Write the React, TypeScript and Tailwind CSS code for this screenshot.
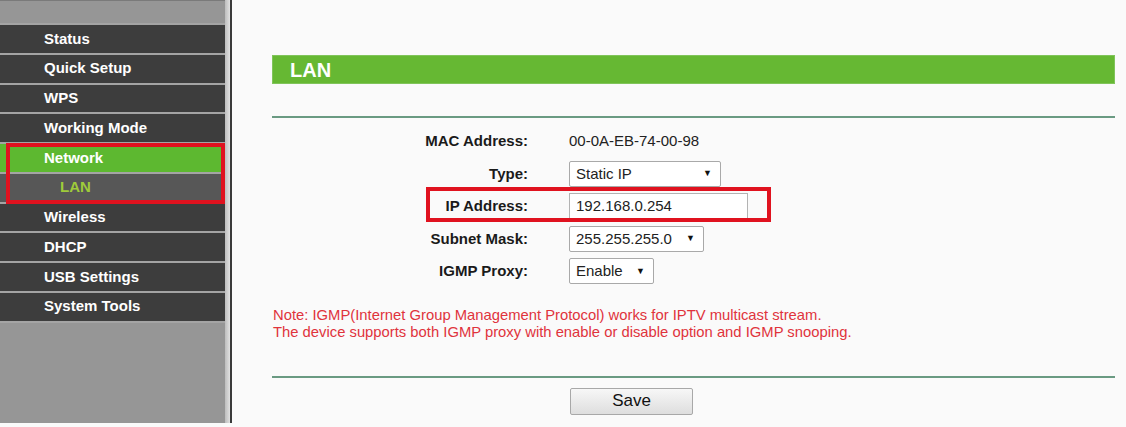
const menu = [
  { label: 'Status' },
  { label: 'Quick Setup' },
  { label: 'WPS' },
  { label: 'Working Mode' },
  { label: 'Network', active: true },
  { label: 'LAN', sub: true },
  { label: 'Wireless' },
  { label: 'DHCP' },
  { label: 'USB Settings' },
  { label: 'System Tools' },
];

function FakeSelect({ value, width }: { value: string; width: string }) {
  return (
    <div
      className={`${width} h-[26px] flex items-center justify-between pl-[6px] pr-[8px] bg-white border border-[#a9a9a9] rounded-[2px] text-[15px] text-[#222]`}
    >
      <span>{value}</span>
      <span className="text-[9px] text-[#111]">▼</span>
    </div>
  );
}

export default function App() {
  return (
    <div
      className="w-[1126px] h-[427px] overflow-hidden bg-[#fafafa] flex"
      style={{ fontFamily: '"Liberation Sans", Arial, sans-serif' }}
    >
      {/* Sidebar */}
      <div className="h-[423px] flex shrink-0">
        <div className="relative w-[225px] h-full bg-[#969696] border-t border-[#7a7a7a] pt-[22px]">
          <div className="border-t-2 border-[#a4a4a4]">
            {menu.map((m) => (
              <div
                key={m.label}
                className={`h-[29.75px] border-b-2 border-[#a4a4a4] flex items-center font-bold text-[15px] ${
                  m.active
                    ? 'bg-[#5db830] text-white'
                    : m.sub
                    ? 'bg-[#575757] text-[#9fcb3a]'
                    : 'bg-[#3d3d3d] text-white'
                } ${m.sub ? 'pl-[60px]' : 'pl-[44px]'}`}
              >
                {m.label}
              </div>
            ))}
          </div>
          {/* highlight annotation */}
          <div className="absolute left-[6px] top-[142px] w-[219px] h-[61px] border-4 border-[#e0121f]" />
        </div>
        <div className="w-[5px] h-full bg-gradient-to-r from-[#bdbdbd] to-[#e2e2e2]" />
        <div className="w-[2px] h-full bg-[#3a3a3a]" />
      </div>

      {/* Content */}
      <div className="flex-1 pl-[40px] pr-[11px] pt-[55px]">
        <div className="h-[29px] bg-[#66b833] border border-[#80c45a] flex items-center pl-[17px] text-white font-bold text-[20px]">
          LAN
        </div>
        <div className="mt-[32px] h-[2px] bg-[#6a9a82]" />

        <div className="relative mt-[7px]">
          <div className="grid grid-cols-[256px_1fr] gap-x-[41px] auto-rows-[32.5px] items-center text-[15px]">
            <div className="text-right font-bold text-[#1a1a1a]">MAC Address:</div>
            <div className="text-[#222]">00-0A-EB-74-00-98</div>

            <div className="text-right font-bold text-[#1a1a1a]">Type:</div>
            <FakeSelect value="Static IP" width="w-[152px]" />

            <div className="text-right font-bold text-[#1a1a1a]">IP Address:</div>
            <div className="w-[179px] h-[26px] bg-white border border-[#b3b3b3] flex items-center pl-[6px] text-[#222]">
              192.168.0.254
            </div>

            <div className="text-right font-bold text-[#1a1a1a]">Subnet Mask:</div>
            <FakeSelect value="255.255.255.0" width="w-[135px]" />

            <div className="text-right font-bold text-[#1a1a1a]">IGMP Proxy:</div>
            <FakeSelect value="Enable" width="w-[85px]" />
          </div>
          {/* highlight annotation */}
          <div className="absolute left-[154px] top-[62px] w-[345px] h-[35px] border-4 border-[#e0121f]" />
        </div>

        <div className="mt-[19px] text-[14.8px] leading-[17px] text-[#e0333c] pl-[1px]">
          <div>Note: IGMP(Internet Group Management Protocol) works for IPTV multicast stream.</div>
          <div>The device supports both IGMP proxy with enable or disable option and IGMP snooping.</div>
        </div>

        <div className="mt-[35px] h-[2px] bg-[#6a9a82]" />

        <div className="mt-[10px] pl-[298px]">
          <div className="w-[123px] h-[27px] flex items-center justify-center border border-[#a8a8a8] rounded-[2px] bg-gradient-to-b from-[#f7f7f7] to-[#dedede] text-[17px] text-[#111]">
            Save
          </div>
        </div>
      </div>
    </div>
  );
}
